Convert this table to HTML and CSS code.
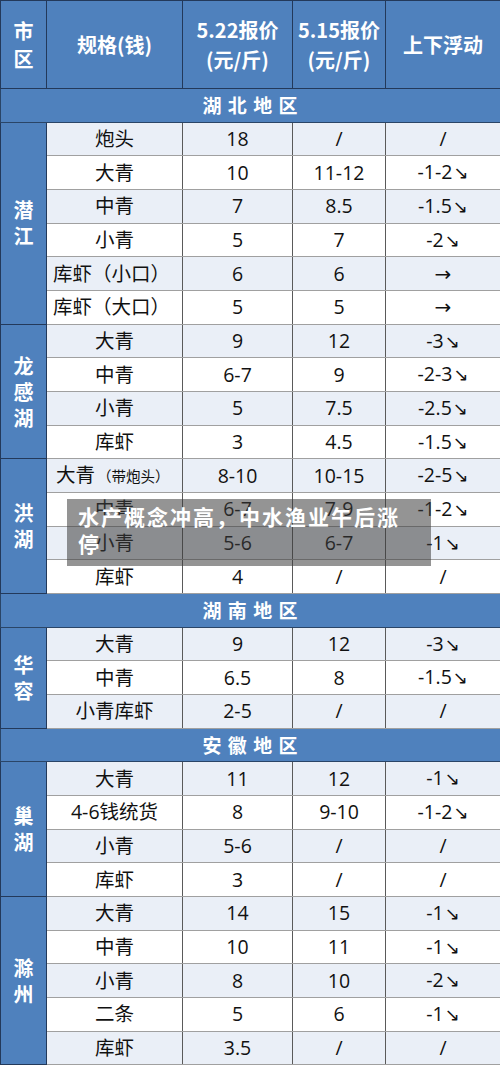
FILE: index.html
```html
<!DOCTYPE html>
<html lang="zh">
<head>
<meta charset="utf-8">
<link rel="stylesheet" href="styles.css">
</head>
<body>
<div class="page">
<table class="price">
  <colgroup>
    <col class="c1"><col class="c2"><col class="c3"><col class="c4"><col class="c5">
  </colgroup>
  <thead>
    <tr class="head">
      <th class="city-h">市区</th>
      <th>规格(钱)</th>
      <th>5.22报价<br>(元/斤)</th>
      <th>5.15报价<br>(元/斤)</th>
      <th>上下浮动</th>
    </tr>
  </thead>
  <tbody>
    <tr class="sec"><td colspan="5">湖 北 地 区</td></tr>
    <tr class="lt"><td class="city" rowspan="6">潜江</td><td>炮头</td><td>18</td><td>/</td><td>/</td></tr>
    <tr><td>大青</td><td>10</td><td>11-12</td><td>-1-2<span class="ar">↘</span></td></tr>
    <tr class="lt"><td>中青</td><td>7</td><td>8.5</td><td>-1.5<span class="ar">↘</span></td></tr>
    <tr><td>小青</td><td>5</td><td>7</td><td>-2<span class="ar">↘</span></td></tr>
    <tr class="lt"><td class="left">库虾（小口）</td><td>6</td><td>6</td><td><span class="ra">→</span></td></tr>
    <tr><td class="left">库虾（大口）</td><td>5</td><td>5</td><td><span class="ra">→</span></td></tr>

    <tr class="lt"><td class="city" rowspan="4">龙感湖</td><td>大青</td><td>9</td><td>12</td><td>-3<span class="ar">↘</span></td></tr>
    <tr><td>中青</td><td>6-7</td><td>9</td><td>-2-3<span class="ar">↘</span></td></tr>
    <tr class="lt"><td>小青</td><td>5</td><td>7.5</td><td>-2.5<span class="ar">↘</span></td></tr>
    <tr><td>库虾</td><td>3</td><td>4.5</td><td>-1.5<span class="ar">↘</span></td></tr>

    <tr class="lt"><td class="city" rowspan="4">洪湖</td><td class="left noted">大青<span class="note">（带炮头）</span></td><td>8-10</td><td>10-15</td><td>-2-5<span class="ar">↘</span></td></tr>
    <tr><td>中青</td><td>6-7</td><td>7-9</td><td>-1-2<span class="ar">↘</span></td></tr>
    <tr class="lt"><td>小青</td><td>5-6</td><td>6-7</td><td>-1<span class="ar">↘</span></td></tr>
    <tr><td>库虾</td><td>4</td><td>/</td><td>/</td></tr>

    <tr class="sec"><td colspan="5">湖 南 地 区</td></tr>
    <tr class="lt"><td class="city" rowspan="3">华容</td><td>大青</td><td>9</td><td>12</td><td>-3<span class="ar">↘</span></td></tr>
    <tr><td>中青</td><td>6.5</td><td>8</td><td>-1.5<span class="ar">↘</span></td></tr>
    <tr class="lt"><td>小青库虾</td><td>2-5</td><td>/</td><td>/</td></tr>

    <tr class="sec"><td colspan="5">安 徽 地 区</td></tr>
    <tr class="lt"><td class="city" rowspan="4">巢湖</td><td>大青</td><td>11</td><td>12</td><td>-1<span class="ar">↘</span></td></tr>
    <tr><td>4-6钱统货</td><td>8</td><td>9-10</td><td>-1-2<span class="ar">↘</span></td></tr>
    <tr class="lt"><td>小青</td><td>5-6</td><td>/</td><td>/</td></tr>
    <tr><td>库虾</td><td>3</td><td>/</td><td>/</td></tr>

    <tr class="lt"><td class="city" rowspan="5">滁州</td><td>大青</td><td>14</td><td>15</td><td>-1<span class="ar">↘</span></td></tr>
    <tr><td>中青</td><td>10</td><td>11</td><td>-1<span class="ar">↘</span></td></tr>
    <tr class="lt"><td>小青</td><td>8</td><td>10</td><td>-2<span class="ar">↘</span></td></tr>
    <tr><td>二条</td><td>5</td><td>6</td><td>-1<span class="ar">↘</span></td></tr>
    <tr class="lt"><td>库虾</td><td>3.5</td><td>/</td><td>/</td></tr>
  </tbody>
</table>
<div class="caption">水产概念冲高，中水渔业午后涨<br>停</div>
</div>
</body>
</html>
```

FILE: styles.css
```css
html, body {
  margin: 0;
  padding: 0;
  background: #ffffff;
}
.page {
  position: relative;
  width: 500px;
  height: 1066px;
  overflow: hidden;
  font-family: "Open Sans", "Noto Sans CJK SC", sans-serif;
}
.price {
  width: 500px;
  border-collapse: collapse;
  table-layout: fixed;
  color: #111111;
}
.c1 { width: 46px; }
.c2 { width: 136px; }
.c3 { width: 110px; }
.c4 { width: 93px; }
.c5 { width: 115px; }

.price th, .price td {
  padding: 0;
  text-align: center;
  vertical-align: middle;
  white-space: nowrap;
  overflow: hidden;
}
.head th {
  height: 87px;
  background: #4f81bd;
  color: #ffffff;
  font-family: "Noto Sans CJK SC", sans-serif;
  font-weight: 700;
  font-size: 20px;
  line-height: 30px;
  border: 1px solid #23395a;
}
.head th.city-h {
  white-space: normal;
  padding: 0 12px;
  font-size: 20px;
  line-height: 28px;
}
.sec td {
  background: #4f81bd;
  color: #ffffff;
  font-family: "Noto Sans CJK SC", sans-serif;
  font-weight: 700;
  font-size: 19px;
  border: 1px solid #2a4567;
  letter-spacing: 1px;
}
tbody tr {
  height: 33.68px;
}
tbody td {
  font-size: 19.5px;
  line-height: 22px;
  background: #ffffff;
  border-left: 1px solid #5a5a5a;
  border-right: 1px solid #5a5a5a;
  border-top: 1.5px solid #a0a0a0;
  border-bottom: 1.5px solid #a0a0a0;
}
tbody tr.lt td {
  background: #eaeff7;
}
tbody td.city, tbody tr.lt td.city {
  background: #4f81bd;
  color: #ffffff;
  font-family: "Noto Sans CJK SC", sans-serif;
  font-weight: 700;
  font-size: 20px;
  line-height: 26px;
  white-space: normal;
  padding: 0 12px;
  border: 1px solid #23395a;
}
tbody td.left {
  text-align: left;
  padding-left: 6px;
}
tbody td.noted {
  padding-left: 9px;
}
.note {
  font-size: 14.5px;
  font-family: "Noto Sans CJK SC", sans-serif;
  margin-left: 2px;
}
.ar {
  font-family: "DejaVu Sans", sans-serif;
  font-size: 18px;
  margin-left: 1px;
}
.ra {
  font-family: "DejaVu Sans", sans-serif;
  font-size: 20px;
}
.caption {
  position: absolute;
  left: 67px;
  top: 499px;
  width: 364px;
  height: 67px;
  box-sizing: border-box;
  padding: 4px 0 0 11px;
  background: rgba(60, 60, 60, 0.55);
  color: #ffffff;
  font-family: "Noto Sans CJK SC", sans-serif;
  font-weight: 700;
  font-size: 21px;
  line-height: 27px;
  letter-spacing: 2px;
}
```
